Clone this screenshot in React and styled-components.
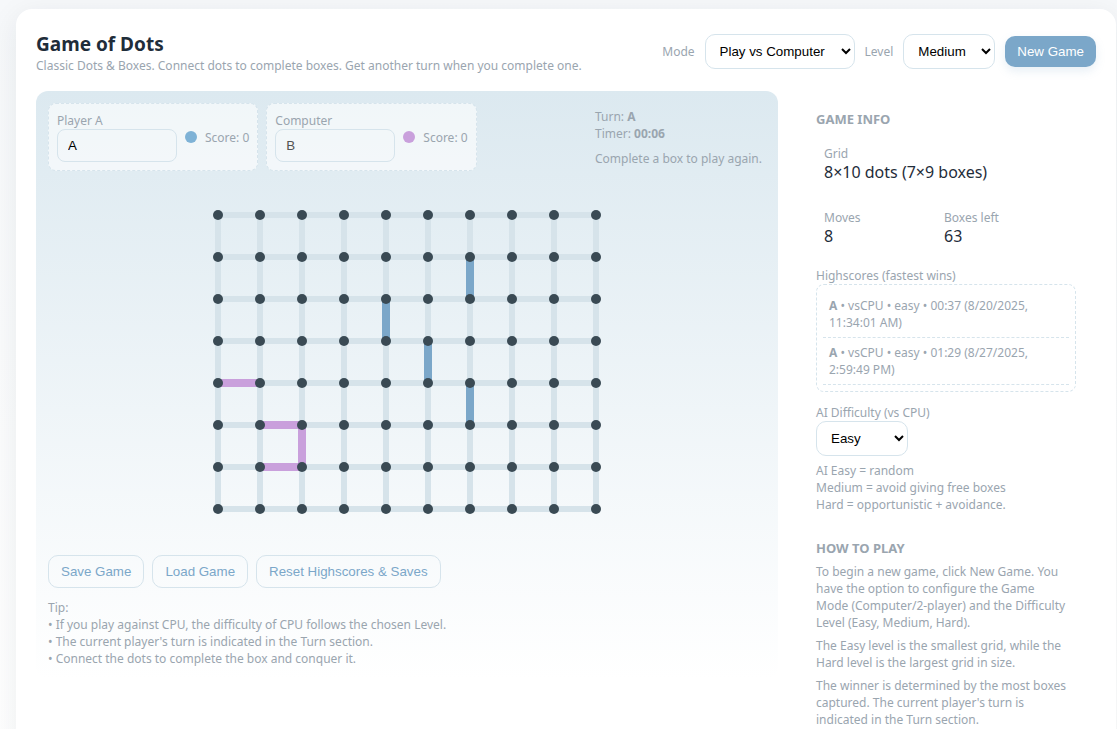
import React, { useState } from "react";
import styled, { createGlobalStyle } from "styled-components";

const GlobalStyle = createGlobalStyle`
  * { box-sizing: border-box; }
  body {
    margin: 0;
    min-height: 100vh;
    background: linear-gradient(180deg, #f6f8fa 0%, #ffffff 100%);
    color: #1f2d3a;
    font-family: "Noto Sans", "Open Sans", sans-serif;
    font-size: 16px;
    line-height: 21px;
  }
  h1, h2, p, ul { margin: 0; padding: 0; }
  button, select, input { font-family: "Liberation Sans", Arial, sans-serif; }
`;

const Card = styled.div`
  margin: 9px 1px 16px 16px;
  padding: 20px;
  border-radius: 16px;
  background: #ffffff;
  box-shadow: 0 6px 30px rgba(30, 40, 50, 0.08);
`;

const Header = styled.header`
  display: flex;
  align-items: center;
  justify-content: space-between;
  gap: 12px;
  margin-bottom: 17px;
`;

const Title = styled.h1`
  && { padding-top: 2px; }
  font-size: 19px;
  line-height: 26px;
  font-weight: 700;
`;

const Muted = styled.div`
  color: #9aa5af;
  font-size: 12px;
  line-height: 17px;
`;

const MutedLabel = styled(Muted).attrs({ as: "label" })`
  display: block;
`;

const Controls = styled.div`
  display: flex;
  align-items: center;
  gap: 10px;
`;

const Select = styled.select`
  width: ${(p) => (p.$wide ? 150 : 92)}px;
  height: 35px;
  padding: 8px 0 8px 10px;
  border: 1px solid #d6e4ec;
  border-radius: 10px;
  background: #ffffff;
  color: #000000;
`;

const Button = styled.button`
  padding: 8px 12px;
  border: 0;
  border-radius: 10px;
  background: #7ba7c9;
  color: #ffffff;
  box-shadow: 0 4px 10px rgba(122, 166, 200, 0.18);
  cursor: pointer;
`;

const GhostButton = styled(Button)`
  border: 1px solid #d6e4ec;
  background: transparent;
  color: #7ba7c9;
  box-shadow: none;
`;

const Main = styled.main`
  display: flex;
  align-items: flex-start;
  gap: 18px;
`;

const BoardPanel = styled.section`
  flex: 1;
  min-width: 0;
  padding: 12px;
  border-radius: 12px;
  background: linear-gradient(180deg, #dce9f0 0%, #ffffff 100%);
`;

const BoardTop = styled.div`
  display: flex;
  align-items: center;
  justify-content: space-between;
`;

const Players = styled.div`
  display: flex;
  gap: 8px;
`;

const PlayerCard = styled.div`
  display: flex;
  align-items: center;
  gap: 8px;
  padding: 8px;
  border: 1px dashed #d6e4ec;
  border-radius: 8px;
  background: rgba(255, 255, 255, 0.6);
`;

const NameInput = styled.input`
  display: block;
  width: 120px;
  height: 33px;
  padding: 8px 10px;
  border: 1px solid #d6e4ec;
  border-radius: 8px;
  background: transparent;
  color: #000000;
  &:disabled { color: #545454; }
`;

const Swatch = styled.span`
  width: 12px;
  height: 12px;
  border-radius: 50%;
  background: ${(p) => p.$color};
`;

const Status = styled.div`
  display: flex;
  flex-direction: column;
  gap: 8px;
  min-width: 171px;
`;

const Board = styled.svg`
  display: block;
  margin: 20px auto 22px;
`;

const Actions = styled.div`
  display: flex;
  gap: 8px;
  margin-bottom: 11px;
`;

const Sidebar = styled.aside`
  flex: 0 0 300px;
  padding: 20px;
`;

const Heading = styled.h2`
  color: #9aa5af;
  font-size: 13px;
  line-height: 17px;
  font-weight: 700;
  text-transform: uppercase;
`;

const Stats = styled.div`
  display: grid;
  grid-template-columns: 120px 120px;
  row-gap: 10px;
  margin-top: 9px;
`;

const Stat = styled.div`
  grid-column: ${(p) => (p.$full ? "1 / -1" : "auto")};
  padding: 8px;
`;

const Group = styled.div`
  margin-top: 12px;
`;

const ScoreList = styled.ul`
  list-style: none;
  border: 1px dashed #d6e4ec;
  border-radius: 8px;
  && { padding: 6px; }
`;

const ScoreItem = styled(Muted).attrs({ as: "li" })`
  padding: 6px;
  border-bottom: 1px dashed #d6e4ec;
`;

const Note = styled(Muted)`
  margin-top: 6px;
`;

const HowTo = styled.section`
  margin-top: 27px;
  padding-right: 8px;
`;

const ROWS = 8;
const COLS = 10;
const STEP = 42;
const PAD = 24;
const at = (i) => PAD + i * STEP;

const COLORS = { A: "#7ba7c9", B: "#c9a0dc" };

// Each played edge runs right (h) or down (v) from the dot at its row and column.
const MOVES = [
  { dir: "v", row: 1, col: 6, by: "A" },
  { dir: "v", row: 2, col: 4, by: "A" },
  { dir: "v", row: 3, col: 5, by: "A" },
  { dir: "v", row: 4, col: 6, by: "A" },
  { dir: "h", row: 4, col: 0, by: "B" },
  { dir: "h", row: 5, col: 1, by: "B" },
  { dir: "v", row: 5, col: 2, by: "B" },
  { dir: "h", row: 6, col: 1, by: "B" },
];

const range = (n) => Array.from({ length: n }, (_, i) => i);

function DotsBoard() {
  const right = at(COLS - 1);
  const bottom = at(ROWS - 1);
  return (
    <Board width={right + PAD} height={bottom + PAD} role="img" aria-label="Game board">
      <g stroke="#d6e3ea" strokeWidth="6">
        {range(ROWS).map((r) => (
          <line key={"h" + r} x1={PAD} y1={at(r)} x2={right} y2={at(r)} />
        ))}
        {range(COLS).map((c) => (
          <line key={"v" + c} x1={at(c)} y1={PAD} x2={at(c)} y2={bottom} />
        ))}
      </g>
      {MOVES.map((m) => (
        <line
          key={m.dir + m.row + m.col}
          x1={at(m.col)}
          y1={at(m.row)}
          x2={at(m.col + (m.dir === "h" ? 1 : 0))}
          y2={at(m.row + (m.dir === "v" ? 1 : 0))}
          stroke={COLORS[m.by]}
          strokeWidth="8"
        />
      ))}
      <g fill="#3a4a54">
        {range(ROWS).map((r) =>
          range(COLS).map((c) => <circle key={r + "-" + c} cx={at(c)} cy={at(r)} r="5" />)
        )}
      </g>
    </Board>
  );
}

function Player({ id, label, color, name, onChange, disabled }) {
  return (
    <PlayerCard>
      <div>
        <MutedLabel htmlFor={id}>{label}</MutedLabel>
        <NameInput id={id} value={name} onChange={onChange} disabled={disabled} />
      </div>
      <Swatch $color={color} />
      <Muted>Score: 0</Muted>
    </PlayerCard>
  );
}

export default function App() {
  const [name, setName] = useState("A");
  return (
    <>
      <GlobalStyle />
      <Card>
        <Header>
          <div>
            <Title>Game of Dots</Title>
            <Muted>Classic Dots &amp; Boxes. Connect dots to complete boxes. Get another turn when you complete one.</Muted>
          </div>
          <Controls>
            <MutedLabel htmlFor="mode">Mode</MutedLabel>
            <Select id="mode" $wide defaultValue="cpu">
              <option value="cpu">Play vs Computer</option>
              <option value="two">2 Players</option>
            </Select>
            <MutedLabel htmlFor="level">Level</MutedLabel>
            <Select id="level" defaultValue="Medium">
              <option>Easy</option>
              <option>Medium</option>
              <option>Hard</option>
            </Select>
            <Button type="button">New Game</Button>
          </Controls>
        </Header>
        <Main>
          <BoardPanel>
            <BoardTop>
              <Players>
                <Player id="player-a" label="Player A" color="#7eb2d6" name={name} onChange={(e) => setName(e.target.value)} />
                <Player id="player-b" label="Computer" color="#c9a0dc" name="B" disabled />
              </Players>
              <Status>
                <Muted>
                  Turn: <strong>A</strong>
                  <br />
                  Timer: <strong>00:06</strong>
                </Muted>
                <Muted>Complete a box to play again.</Muted>
              </Status>
            </BoardTop>
            <DotsBoard />
            <Actions>
              <GhostButton type="button">Save Game</GhostButton>
              <GhostButton type="button">Load Game</GhostButton>
              <GhostButton type="button">Reset Highscores &amp; Saves</GhostButton>
            </Actions>
            <Muted>
              Tip:
              <br />• If you play against CPU, the difficulty of CPU follows the chosen Level.
              <br />• The current player's turn is indicated in the Turn section.
              <br />• Connect the dots to complete the box and conquer it.
            </Muted>
          </BoardPanel>
          <Sidebar>
            <Heading>Game Info</Heading>
            <Stats>
              <Stat $full>
                <Muted>Grid</Muted>
                8×10 dots (7×9 boxes)
              </Stat>
              <Stat>
                <Muted>Moves</Muted>8
              </Stat>
              <Stat>
                <Muted>Boxes left</Muted>63
              </Stat>
            </Stats>
            <Group>
              <Muted>Highscores (fastest wins)</Muted>
              <ScoreList>
                <ScoreItem>
                  <strong>A</strong> • vsCPU • easy • 00:37 (8/20/2025, 11:34:01 AM)
                </ScoreItem>
                <ScoreItem>
                  <strong>A</strong> • vsCPU • easy • 01:29 (8/27/2025, 2:59:49 PM)
                </ScoreItem>
              </ScoreList>
            </Group>
            <Group>
              <MutedLabel htmlFor="ai">AI Difficulty (vs CPU)</MutedLabel>
              <Select id="ai" defaultValue="Easy">
                <option>Easy</option>
                <option>Medium</option>
                <option>Hard</option>
              </Select>
              <Note>
                AI Easy = random
                <br />
                Medium = avoid giving free boxes
                <br />
                Hard = opportunistic + avoidance.
              </Note>
            </Group>
            <HowTo>
              <Heading>How to Play</Heading>
              <Note>
                To begin a new game, click New Game. You have the option to configure the Game Mode (Computer/2-player) and the Difficulty Level (Easy, Medium, Hard).
              </Note>
              <Note>The Easy level is the smallest grid, while the Hard level is the largest grid in size.</Note>
              <Note>
                The winner is determined by the most boxes captured. The current player's turn is indicated in the Turn section.
              </Note>
            </HowTo>
          </Sidebar>
        </Main>
      </Card>
    </>
  );
}
